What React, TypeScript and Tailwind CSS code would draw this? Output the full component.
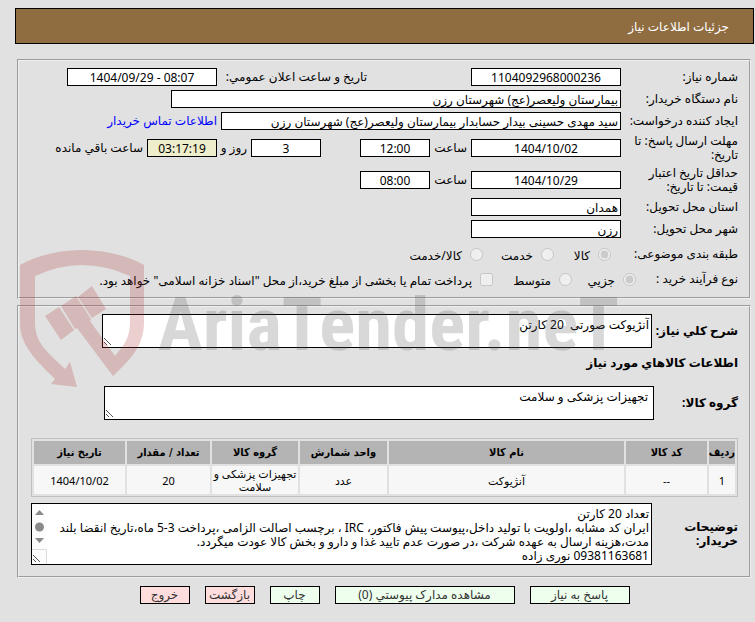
import React from "react";

const inputBase = "h-[18px] shrink-0 border border-black px-[2px] text-[12px] leading-[14px] text-black";

function Field({ label, value, className, hideLabel }: { label: string; value: string; className: string; hideLabel?: boolean }) {
  return (
    <input
      aria-label={hideLabel ? label : undefined}
      id={hideLabel ? undefined : label}
      readOnly
      value={value}
      className={`${inputBase} ${className}`}
    />
  );
}

function Row({ label, htmlFor, tall, children }: { label: string; htmlFor?: string; tall?: boolean; children: React.ReactNode }) {
  return (
    <div className={`flex items-center ${tall ? "h-8" : "h-[22px]"}`}>
      <label htmlFor={htmlFor} className="w-[117px] shrink-0 pl-1">
        {label}
      </label>
      {children}
    </div>
  );
}

function Choice({ type = "radio", name, label, checked, className }: { type?: string; name: string; label: string; checked?: boolean; className?: string }) {
  return (
    <label className={`flex shrink-0 items-center whitespace-nowrap ${className ?? ""}`}>
      <input type={type} name={name} defaultChecked={checked} disabled className="m-0 size-[13px] shrink-0" />
      <span className="mr-2 pt-1">{label}</span>
    </label>
  );
}

function Grip() {
  return (
    <svg aria-hidden="true" className="absolute bottom-[2px] left-[2px]" width="8" height="8" viewBox="0 0 8 8" stroke="#555" strokeWidth="1">
      <path d="M0 0L7 7M0 4L3 7" fill="none" />
    </svg>
  );
}

function Watermark() {
  return (
    <div aria-hidden="true" dir="ltr" className="pointer-events-none absolute left-[20px] top-[250px] flex items-start">
      <svg width="126" height="138" viewBox="0 0 126 138" fill="#ae3030" fillOpacity="0.23">
        <path d="M0 15Q28 0 62 0T124 15V72C124 95 112 108 93 126L57 78L55 79L41 56L56 46L71 69L70 71L95 106C104 95 110 88 110 72V26Q85 15 62 15T15 26V72C15 92 25 100 45 119L50 112L57 137L31 134L35 129C10 105 0 92 0 72Z" />
        <path d="M25 66L39 57L54 80L41 90ZM58 47L72 36L86 59L72 68Z" />
      </svg>
      <span className="ml-[12px] mt-[26px] whitespace-nowrap font-['Liberation_Sans_Narrow','Roboto_Condensed','DejaVu_Sans_Condensed',sans-serif] text-[75px] font-bold leading-[96px] text-[#575757]/[0.23]">
        AriaTender.neT
      </span>
    </div>
  );
}

const columns = [
  ["ردیف", "w-[26px]"],
  ["کد کالا", "w-[81px]"],
  ["نام کالا", ""],
  ["واحد شمارش", "w-[87px]"],
  ["گروه کالا", "w-[86px]"],
  ["تعداد / مقدار", "w-[83px]"],
  ["تاریخ نیاز", "w-[91px]"],
];
const cells = ["1", "--", "آنژیوکت", "عدد", "تجهیزات پزشکی و سلامت", "20", "1404/10/02"];

const notes =
  "تعداد 20 کارتن\nایران کد مشابه ،اولویت با تولید داخل،پیوست پیش فاکتور، IRC ، برچسب اصالت الزامی ،پرداخت 3-5 ماه،تاریخ انقضا بلند مدت،هزینه ارسال به عهده شرکت ،در صورت عدم تایید غذا و دارو و بخش کالا عودت میگردد.\n09381163681 نوری زاده";

const buttons = [
  ["پاسخ به نیاز", "w-[100px] bg-[#eeffee]"],
  ["مشاهده مدارک پیوستي (0)", "w-[180px] bg-[#eeffee]"],
  ["چاپ", "w-[50px] bg-[#eeffee]"],
  ["بازگشت", "w-[50px] bg-[#ffdddd]"],
  ["خروج", "w-[50px] bg-[#ffdddd]"],
];

const area = "block w-full resize-none overflow-hidden border border-black bg-white py-[3px] text-[12px] leading-[14px] text-black";

export default function App() {
  return (
    <div dir="rtl" className="relative min-h-screen bg-[#e1e1e1] pt-2 pb-4 pl-[15px] pr-px font-['Noto_Sans','DejaVu_Sans',sans-serif] text-[12px] leading-[14px] text-black">
      <h1 className="flex h-9 items-center border border-black bg-[#8f6d41] px-6 pt-[2px] text-[12px] text-white">جزئیات اطلاعات نیاز</h1>

      <fieldset className="mr-[3px] ml-[2px] mt-[15px] border-2 border-[#f0f0f0] px-[11px] pt-[5px] pb-[7px] [border-style:groove]">
        <Row label="شماره نیاز:" htmlFor="شماره نیاز">
          <Field label="شماره نیاز" value="1104092968000236" className="w-[150px] bg-white text-center" />
          <label htmlFor="تاریخ اعلان" className="mr-[104px] w-[150px] shrink-0 whitespace-nowrap">تاریخ و ساعت اعلان عمومي:</label>
          <input id="تاریخ اعلان" dir="ltr" readOnly value="1404/09/29 - 08:07" className={`${inputBase} w-[150px] bg-white text-center`} />
        </Row>
        <Row label="نام دستگاه خریدار:" htmlFor="نام دستگاه">
          <Field label="نام دستگاه" value="بیمارستان ولیعصر(عج) شهرستان رزن" className="w-[450px] bg-white" />
        </Row>
        <Row label="ایجاد کننده درخواست:" htmlFor="ایجاد کننده">
          <Field label="ایجاد کننده" value="سید مهدی حسینی بیدار حسابدار بیمارستان ولیعصر(عج) شهرستان رزن" className="w-[400px] bg-white" />
          <a href="#contact" className="mr-1 whitespace-nowrap text-[#0000ff]">اطلاعات تماس خریدار</a>
        </Row>
        <Row label="مهلت ارسال پاسخ: تا تاریخ:" htmlFor="مهلت" tall>
          <Field label="مهلت" value="1404/10/02" className="w-[150px] bg-white text-center" />
          <label htmlFor="ساعت مهلت" className="w-[41px] shrink-0 px-1">ساعت</label>
          <Field label="ساعت مهلت" value="12:00" className="w-[70px] bg-white text-center" />
          <Field label="روز" value="3" hideLabel className="mr-[39px] w-[70px] bg-white text-center" />
          <span className="w-[34px] shrink-0 whitespace-nowrap px-1">روز و</span>
          <Field label="زمان باقي مانده" value="03:17:19" hideLabel className="w-[70px] bg-[#eeeecc] text-center" />
          <span className="mr-1 whitespace-nowrap">ساعت باقي مانده</span>
        </Row>
        <Row label="حداقل تاریخ اعتبار قیمت: تا تاریخ:" htmlFor="اعتبار" tall>
          <Field label="اعتبار" value="1404/10/29" className="w-[150px] bg-white text-center" />
          <label htmlFor="ساعت اعتبار" className="w-[41px] shrink-0 px-1">ساعت</label>
          <Field label="ساعت اعتبار" value="08:00" className="w-[70px] bg-white text-center" />
        </Row>
        <Row label="استان محل تحویل:" htmlFor="استان">
          <Field label="استان" value="همدان" className="w-[150px] bg-white" />
        </Row>
        <Row label="شهر محل تحویل:" htmlFor="شهر">
          <Field label="شهر" value="رزن" className="w-[150px] bg-white" />
        </Row>
        <div role="radiogroup" className="flex h-7 items-center">
          <span className="w-[127px] shrink-0">طبقه بندی موضوعی:</span>
          <Choice name="subject" label="کالا" checked className="w-[57px]" />
          <Choice name="subject" label="خدمت" className="w-[71px]" />
          <Choice name="subject" label="کالا/خدمت" />
        </div>
        <div role="radiogroup" className="flex h-[22px] items-center">
          <span className="w-[102px] shrink-0">نوع فرآیند خرید :</span>
          <Choice name="process" label="جزیي" checked className="w-[64px]" />
          <Choice name="process" label="متوسط" className="w-[79px]" />
          <Choice type="checkbox" name="treasury" label={'پرداخت تمام یا بخشی از مبلغ خرید،از محل "اسناد خزانه اسلامی" خواهد بود.'} />
        </div>
      </fieldset>

      <fieldset className="mr-[3px] ml-[2px] mt-[6px] border-2 border-[#f0f0f0] px-[11px] pt-[7px] pb-[11px] [border-style:groove]">
        <div className="flex items-center">
          <label htmlFor="desc" className="w-[86px] shrink-0 whitespace-nowrap font-bold">شرح کلي نیاز:</label>
          <div className="relative w-[550px]">
            <textarea id="desc" readOnly value="آنژیوکت صورتی  20 کارتن" className={`${area} h-[34px] px-[2px]`} />
            <Grip />
          </div>
        </div>
        <h2 className="mt-2 text-[12px] font-bold leading-[14px]">اطلاعات کالاهاي مورد نیاز</h2>
        <div className="mt-4 flex items-center">
          <label htmlFor="group" className="w-[84px] shrink-0 font-bold">گروه کالا:</label>
          <div className="relative w-[550px]">
            <textarea id="group" readOnly value="تجهیزات پزشکی و سلامت" className={`${area} h-[34px] px-[5px]`} />
            <Grip />
          </div>
        </div>
        <table className="mr-0 ml-px mt-[18px] w-[calc(100%-1px)] table-fixed border-separate border-spacing-[2px] border border-[#c0c0c0] text-center text-[11px] leading-[13px]">
          <thead>
            <tr className="h-[23px] bg-[#b4b4b4] font-['DejaVu_Sans_Condensed','DejaVu_Sans',sans-serif]">
              {columns.map(([name, width]) => (
                <th key={name} scope="col" className={`whitespace-nowrap p-0 font-bold ${width}`}>{name}</th>
              ))}
            </tr>
          </thead>
          <tbody>
            <tr className="h-7 bg-[#f7f7f7]">
              {cells.map((cell) => (
                <td key={cell} className="p-0">{cell}</td>
              ))}
            </tr>
          </tbody>
        </table>
        <div className="mt-[6px] flex items-center">
          <label htmlFor="notes" className="w-[86px] shrink-0 pl-4 font-bold">توضیحات خریدار:</label>
          <div className="relative ml-px flex-1">
            <textarea id="notes" readOnly value={notes} className={`${area} h-[62px] pr-[2px] pl-[17px]`} />
            <svg aria-hidden="true" className="absolute left-px top-px" width="15" height="60" viewBox="0 0 15 60">
              <path fill="#fcfcfc" d="M0 0h15v60H0z" />
              <path fill="#8a8a8a" d="M3 11L7.5 6L12 11ZM3 34h9L7.5 39Z" />
              <circle cx="7.5" cy="23" r="4.5" fill="#8a8a8a" />
              <path fill="none" stroke="#dcdcdc" d="M0 45.5h14.5V60" />
            </svg>
            <Grip />
          </div>
        </div>
      </fieldset>

      <div className="mt-2 flex justify-center gap-[15px]">
        {buttons.map(([name, look]) => (
          <button key={name} type="button" className={`h-[18px] whitespace-nowrap border border-black text-[12px] leading-[14px] text-[#333] ${look}`}>
            {name}
          </button>
        ))}
      </div>

      <Watermark />
    </div>
  );
}
